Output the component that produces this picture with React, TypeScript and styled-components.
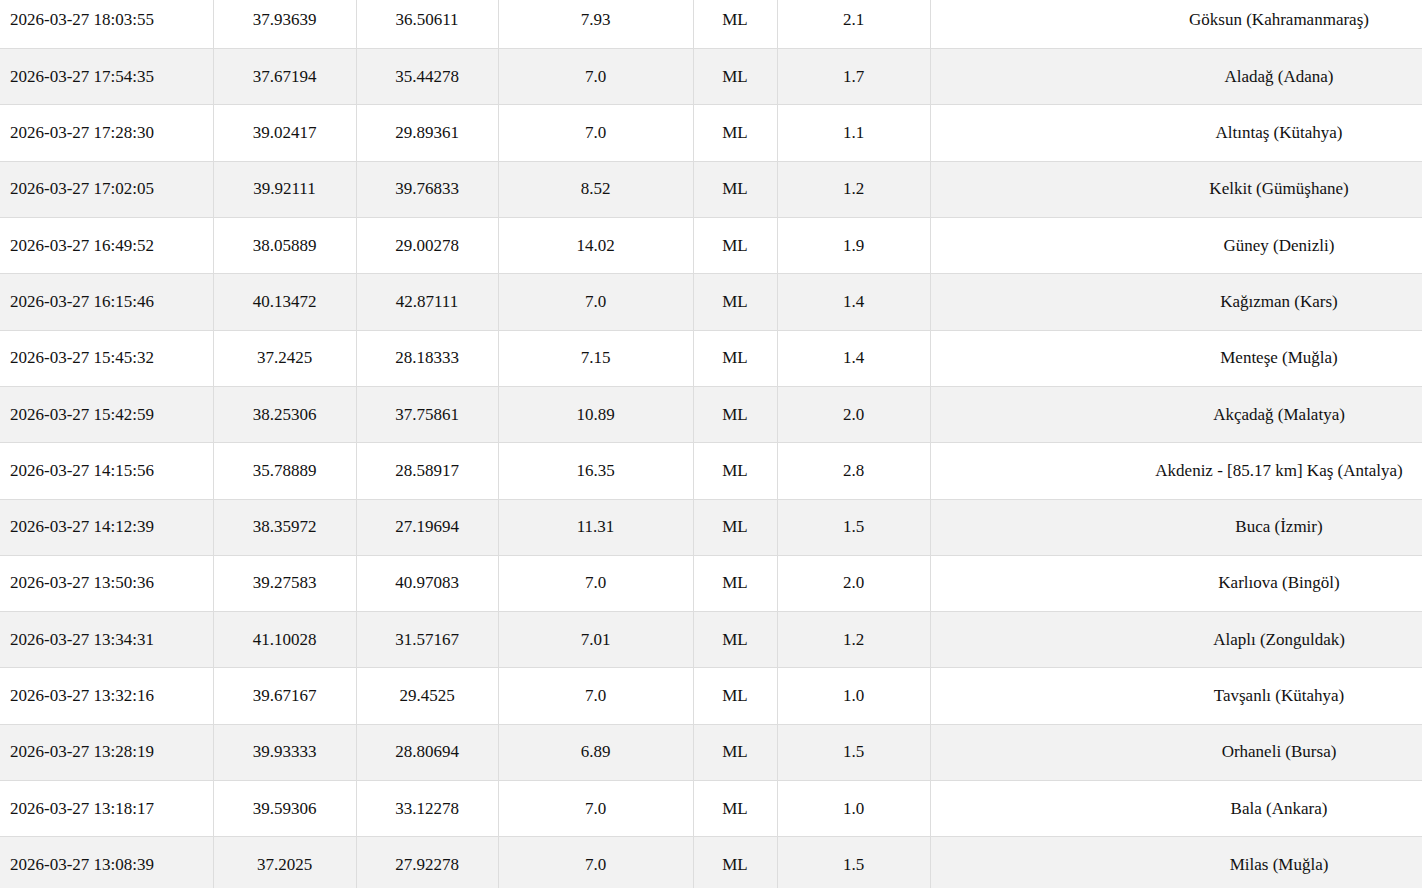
import React from "react";
import styled, { createGlobalStyle } from "styled-components";

const GlobalStyle = createGlobalStyle`
  html, body {
    margin: 0;
    padding: 0;
    overflow: hidden;
    background: #ffffff;
  }
`;

const Viewport = styled.div`
  width: 1422px;
  height: 888px;
  overflow: hidden;
`;

const QuakeTable = styled.table`
  margin-top: -8.3px;
  width: 1628px;
  border-collapse: collapse;
  table-layout: fixed;
  font-family: "Liberation Serif", "Times New Roman", serif;
  font-size: 17px;
  color: #111;
`;

const Row = styled.tr`
  height: 56.32px;
  background: #ffffff;

  &:nth-child(even) {
    background: #f2f2f2;
  }
`;

const Cell = styled.td<{ $left?: boolean }>`
  padding: 0 10px;
  border: 1px solid #dddddd;
  text-align: ${(p) => (p.$left ? "left" : "center")};
  white-space: nowrap;

  &:first-child {
    border-left: none;
  }
`;

type Quake = [string, string, string, string, string, string, string];

const quakes: Quake[] = [
  ["2026-03-27 18:03:55", "37.93639", "36.50611", "7.93", "ML", "2.1", "Göksun (Kahramanmaraş)"],
  ["2026-03-27 17:54:35", "37.67194", "35.44278", "7.0", "ML", "1.7", "Aladağ (Adana)"],
  ["2026-03-27 17:28:30", "39.02417", "29.89361", "7.0", "ML", "1.1", "Altıntaş (Kütahya)"],
  ["2026-03-27 17:02:05", "39.92111", "39.76833", "8.52", "ML", "1.2", "Kelkit (Gümüşhane)"],
  ["2026-03-27 16:49:52", "38.05889", "29.00278", "14.02", "ML", "1.9", "Güney (Denizli)"],
  ["2026-03-27 16:15:46", "40.13472", "42.87111", "7.0", "ML", "1.4", "Kağızman (Kars)"],
  ["2026-03-27 15:45:32", "37.2425", "28.18333", "7.15", "ML", "1.4", "Menteşe (Muğla)"],
  ["2026-03-27 15:42:59", "38.25306", "37.75861", "10.89", "ML", "2.0", "Akçadağ (Malatya)"],
  ["2026-03-27 14:15:56", "35.78889", "28.58917", "16.35", "ML", "2.8", "Akdeniz - [85.17 km] Kaş (Antalya)"],
  ["2026-03-27 14:12:39", "38.35972", "27.19694", "11.31", "ML", "1.5", "Buca (İzmir)"],
  ["2026-03-27 13:50:36", "39.27583", "40.97083", "7.0", "ML", "2.0", "Karlıova (Bingöl)"],
  ["2026-03-27 13:34:31", "41.10028", "31.57167", "7.01", "ML", "1.2", "Alaplı (Zonguldak)"],
  ["2026-03-27 13:32:16", "39.67167", "29.4525", "7.0", "ML", "1.0", "Tavşanlı (Kütahya)"],
  ["2026-03-27 13:28:19", "39.93333", "28.80694", "6.89", "ML", "1.5", "Orhaneli (Bursa)"],
  ["2026-03-27 13:18:17", "39.59306", "33.12278", "7.0", "ML", "1.0", "Bala (Ankara)"],
  ["2026-03-27 13:08:39", "37.2025", "27.92278", "7.0", "ML", "1.5", "Milas (Muğla)"],
];

const widths = [213, 143, 142, 195, 84, 153, 698];

const App: React.FC = () => {
  return (
    <Viewport>
      <GlobalStyle />
      <QuakeTable>
        <colgroup>
          {widths.map((w, i) => (
            <col key={i} style={{ width: w }} />
          ))}
        </colgroup>
        <tbody>
          {quakes.map((q, i) => (
            <Row key={i}>
              {q.map((v, j) => (
                <Cell key={j} $left={j === 0}>
                  {v}
                </Cell>
              ))}
            </Row>
          ))}
        </tbody>
      </QuakeTable>
    </Viewport>
  );
};

export default App;
